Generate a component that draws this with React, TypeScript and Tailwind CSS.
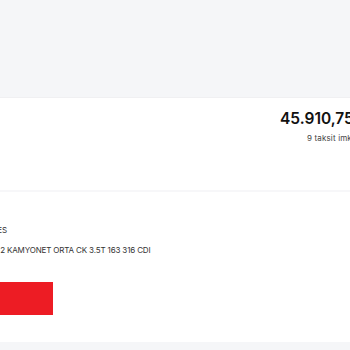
export default function App() {
  return (
    <div className="w-[350px] h-[350px] overflow-hidden bg-[#f5f6f8]" style={{ fontFamily: "Inter, 'Noto Sans', sans-serif" }}>
      <div className="h-[97px]" />
      <div className="bg-white h-[93px] border-t border-[#f0f0f2] flex justify-end overflow-hidden">
        <div className="flex flex-col items-start pt-[11px] mr-[-70px] w-[140px] shrink-0">
          <div className="text-[15.5px] font-semibold text-[#111] whitespace-nowrap leading-[20px] tracking-[0px]">45.910,75 TL</div>
          <div className="text-[8px] text-[#444] whitespace-nowrap mt-[3px] ml-[27px] tracking-[0.15px]">9 taksit imkanı</div>
        </div>
      </div>
      <div className="h-[2px] bg-[#f7f7f9]" />
      <div className="bg-white h-[150px] overflow-hidden">
        <div className="pt-[32px] flex flex-col text-[8px] text-[#333] tracking-[-0.15px] leading-[12px]">
          <div className="w-[7px] flex justify-end whitespace-nowrap">MERCEDES</div>
          <div className="flex whitespace-nowrap mt-[8px]">
            <div className="w-[5px] flex justify-end">SPRINTER 2</div>
            <div className="ml-[2px]">KAMYONET ORTA CK 3.5T 163 316 CDI</div>
          </div>
          <div className="mt-[26px] ml-[-60px] w-[113px] h-[33px] bg-[#ed1c24]" />
        </div>
      </div>
    </div>
  );
}
